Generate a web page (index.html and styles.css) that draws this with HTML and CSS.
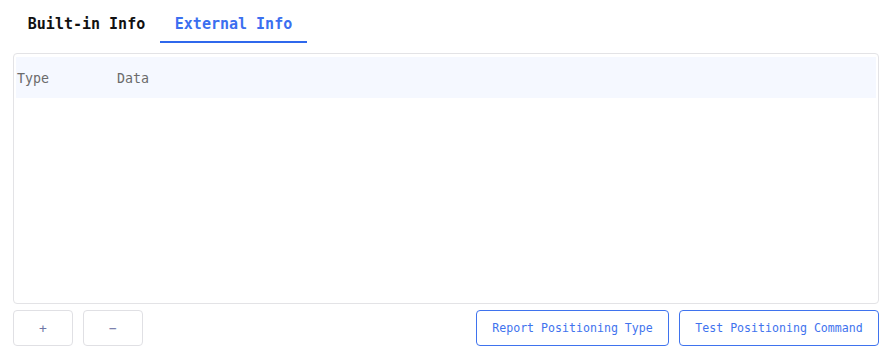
FILE: index.html
```html
<!DOCTYPE html>
<html lang="en">
<head>
  <meta charset="UTF-8">
  <title>External Info</title>
  <link rel="stylesheet" href="styles.css">
</head>
<body>

  <div class="panel">
    <!-- Tabs -->
    <div class="tabs">
      <div class="tab">Built-in Info</div>
      <div class="tab active">External Info</div>
    </div>

    <!-- Table -->
    <div class="table-box">
      <table>
        <thead>
          <tr>
            <th class="col-type">Type</th>
            <th>Data</th>
          </tr>
        </thead>
        <tbody></tbody>
      </table>
    </div>

    <!-- Actions -->
    <div class="actions">
      <div class="left">
        <button class="btn-small">+</button>
        <button class="btn-small">&minus;</button>
      </div>
      <div class="right">
        <button class="btn-blue report">Report Positioning Type</button>
        <button class="btn-blue test">Test Positioning Command</button>
      </div>
    </div>
  </div>

</body>
</html>
```

FILE: styles.css
```css
body {
  margin: 0;
  background: #ffffff;
  font-family: "DejaVu Sans Mono", "Liberation Mono", monospace;
}
.panel {
  padding: 0 10px 0 13px;
}
.tabs {
  display: flex;
  height: 43px;
}
.tab {
  width: 147px;
  height: 43px;
  box-sizing: border-box;
  text-align: center;
  font-size: 15px;
  font-weight: bold;
  line-height: 34px;
  color: #111;
  padding-top: 7px;
}
.tab.active {
  color: #3b6ff0;
  border-bottom: 2px solid #2f68ec;
}
.table-box {
  margin-top: 10px;
  border: 1px solid #e3e3e6;
  border-radius: 4px;
  padding: 3px 2px;
  box-sizing: border-box;
  height: 251px;
}
table {
  width: 100%;
  border-collapse: collapse;
}
th {
  background: #f5f8ff;
  height: 39px;
  padding: 2px 0 0 1px;
  text-align: left;
  font-weight: normal;
  font-size: 13.3px;
  color: #6b6b6b;
}
.col-type {
  width: 99px;
}
.actions {
  display: flex;
  justify-content: space-between;
  margin-top: 6px;
}
.left, .right {
  display: flex;
  gap: 10px;
}
button {
  height: 36px;
  border-radius: 4px;
  background: #fff;
  font-family: "DejaVu Sans Mono", "Liberation Mono", monospace;
  font-size: 11.6px;
  cursor: pointer;
}
.btn-small {
  width: 60px;
  border: 1px solid #e0e0e4;
  color: #6f75a6;
  font-size: 13px;
}
.btn-blue {
  border: 1px solid #3f73ee;
  color: #3f73ee;
}
.report {
  width: 193px;
}
.test {
  width: 200px;
}
```
